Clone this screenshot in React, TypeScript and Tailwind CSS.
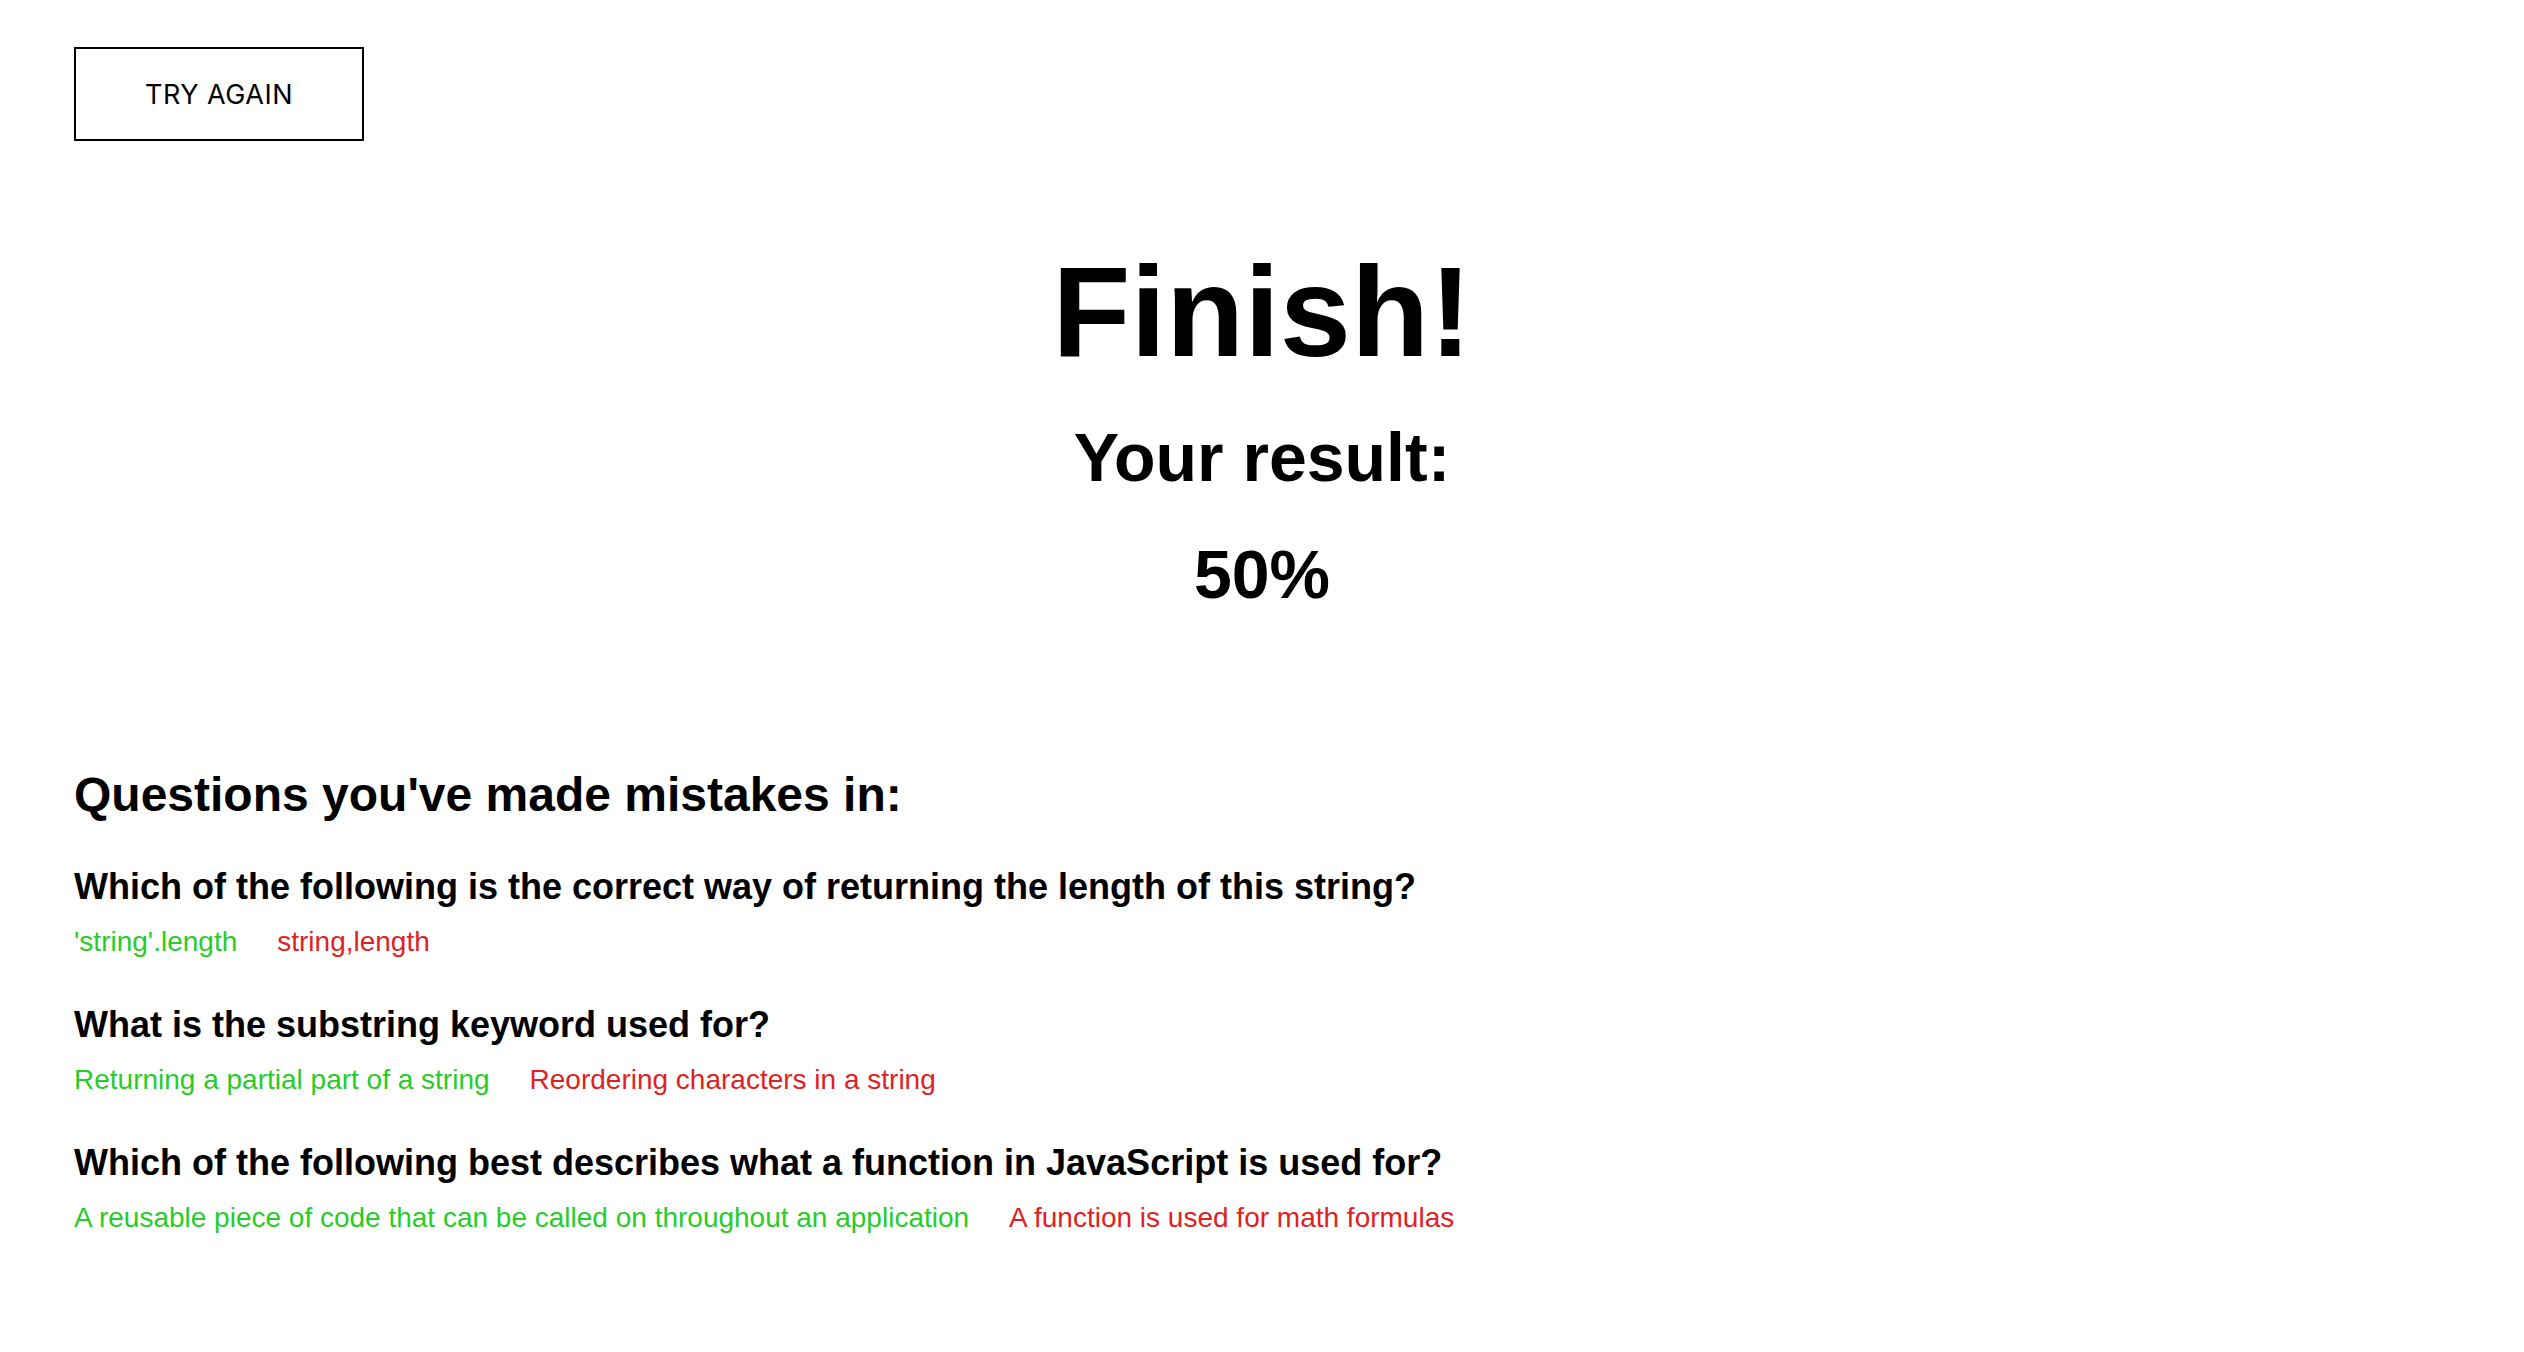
import React from 'react';

const mistakes = [
  {
    question: 'Which of the following is the correct way of returning the length of this string?',
    correct: "'string'.length",
    chosen: 'string,length',
  },
  {
    question: 'What is the substring keyword used for?',
    correct: 'Returning a partial part of a string',
    chosen: 'Reordering characters in a string',
  },
  {
    question: 'Which of the following best describes what a function in JavaScript is used for?',
    correct: 'A reusable piece of code that can be called on throughout an application',
    chosen: 'A function is used for math formulas',
  },
];

export default function App() {
  return (
    <div className="min-h-screen bg-white px-[74px] pt-[47px] pb-20 text-black font-['Liberation_Sans',Arial,sans-serif]">
      <button className="w-[290px] h-[94px] pt-[3px] border-2 border-black bg-white text-[27px] tracking-[0.5px] font-['Inter',sans-serif]">
        TRY AGAIN
      </button>

      <div className="flex flex-col items-center mt-[107px]">
        <h1 className="text-[128px] leading-none font-bold">Finish!</h1>
        <h2 className="mt-[47px] text-[68px] leading-none font-bold">Your result:</h2>
        <p className="mt-[49px] text-[68px] leading-none font-bold">50%</p>
      </div>

      <h3 className="mt-[163px] text-[48px] leading-none font-bold">Questions you've made mistakes in:</h3>

      <div className="flex flex-col gap-[51px] mt-[50px]">
        {mistakes.map((m) => (
          <div key={m.question} className="flex flex-col gap-[23px]">
            <h4 className="text-[36px] leading-none font-bold">{m.question}</h4>
            <div className="flex gap-[40px] text-[28px] leading-none">
              <span className="text-[#28cc28]">{m.correct}</span>
              <span className="text-[#de2222]">{m.chosen}</span>
            </div>
          </div>
        ))}
      </div>
    </div>
  );
}
